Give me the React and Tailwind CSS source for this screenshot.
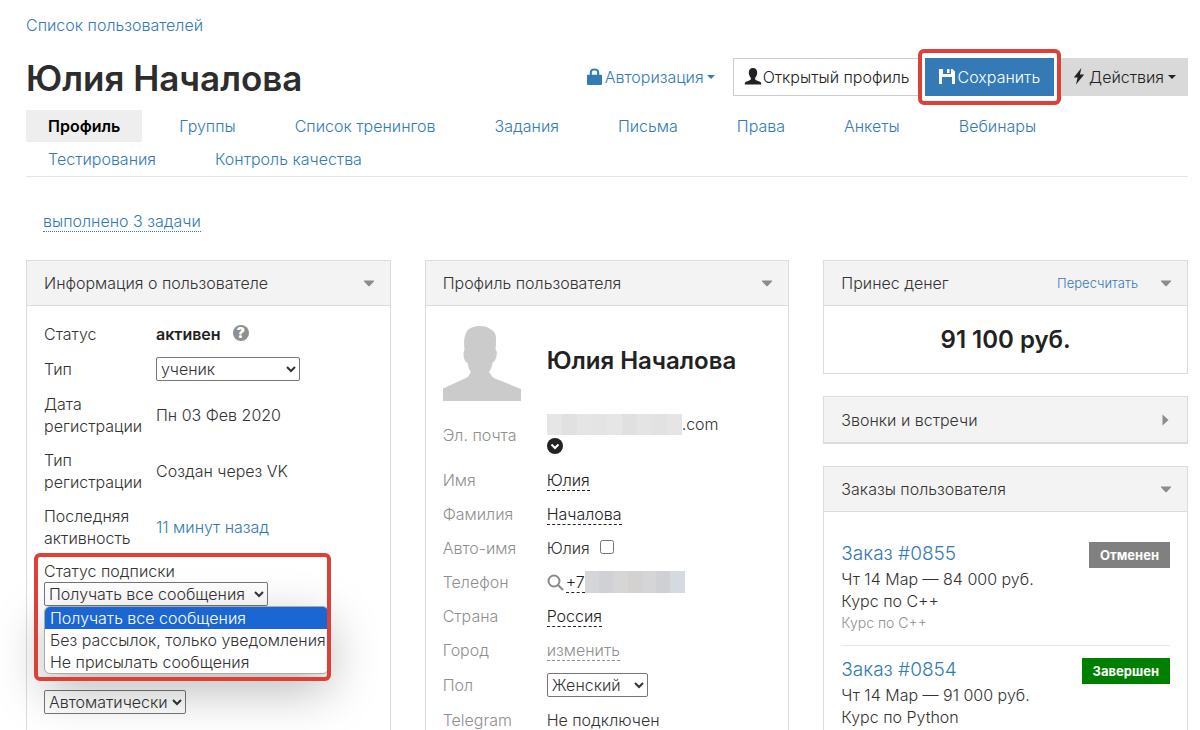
import React, { useState } from 'react';
import clsx from 'clsx';

const TABS = [
  'Профиль',
  'Группы',
  'Список тренингов',
  'Задания',
  'Письма',
  'Права',
  'Анкеты',
  'Вебинары',
  'Тестирования',
  'Контроль качества',
];

const SUBSCRIPTION_OPTIONS = [
  'Получать все сообщения',
  'Без рассылок, только уведомления',
  'Не присылать сообщения',
];

const ORDERS = [
  {
    id: '0855',
    info: 'Чт 14 Мар — 84 000 руб.',
    course: 'Курс по C++',
    note: 'Курс по C++',
    status: 'Отменен',
    statusClass: 'bg-[#808080]',
  },
  {
    id: '0854',
    info: 'Чт 14 Мар — 91 000 руб.',
    course: 'Курс по Python',
    status: 'Завершен',
    statusClass: 'bg-[#008000]',
  },
];

const EMAIL_MASK = ['#e6e6e6', '#e1e1e1', '#e5e5e5', '#e4e4e4', '#e6e6e6', '#e0e0e0', '#e4e4e4', '#e2e2e2', '#e5e5e5'];
const PHONE_MASK = ['#d6d5d8', '#cfd1d4', '#d6d6d6', '#d3d2d0', '#d5d5d8', '#cfd0d4', '#d5dae0'];

function LockIcon() {
  return (
    <svg viewBox="0 0 16 18" className="mb-0.5 h-[17px] w-[15px]" fill="currentColor" aria-hidden="true">
      <path d="M3 7V4.500C3 2 4.800.500 8 .500S13 2 13 4.500V7h2c.600 0 1 .400 1 1v9c0 .600-.400 1-1 1H1c-.600 0-1-.400-1-1V8c0-.600.400-1 1-1zm2.200 0h5.600V4.800C10.800 3.400 9.800 2.700 8 2.700S5.200 3.400 5.200 4.800z" />
    </svg>
  );
}

function UserIcon() {
  return (
    <svg viewBox="0 0 18 18" className="mb-0.5 h-[18px] w-[18px]" fill="currentColor" aria-hidden="true">
      <path d="M9 1c2.700 0 4.200 1.900 4.200 4.500 0 2-.8 4-2 5.200v1.200c0 .7.4 1 1 1.300l3.700 1.500c.9.400 1.300.9 1.300 1.800V17.500H.800v-1c0-.9.400-1.400 1.300-1.800l3.700-1.500c.6-.300 1-.6 1-1.300v-1.200c-1.200-1.200-2-3.200-2-5.200C4.800 2.900 6.300 1 9 1z" />
    </svg>
  );
}

function SaveIcon() {
  return (
    <svg viewBox="0 0 16 15" className="mb-0.5 h-[15px] w-4" fill="currentColor" aria-hidden="true">
      <path d="M0 0h4v5h8V0h1.500L16 2.500V15h-3V8H3v7H0zM8 0h2.500v4H8z" />
    </svg>
  );
}

function FlashIcon() {
  return (
    <svg viewBox="0 0 12 18" className="mb-0.5 h-[17px] w-3" fill="currentColor" aria-hidden="true">
      <path d="M8.500 0 .500 10h4L2.800 17.500 11.500 7H7z" />
    </svg>
  );
}

function Caret() {
  return (
    <svg viewBox="0 0 8 4" className="h-1 w-2" fill="currentColor" aria-hidden="true">
      <path d="M0 0h8L4 4z" />
    </svg>
  );
}

function Avatar() {
  return (
    <svg viewBox="0 0 78 76" className="h-[76px] w-[78px]" fill="#cbcbcb" role="img" aria-label="Фото">
      <path d="M0 76V63.500L23 53c2-1 3-2.500 4-4.500l1-1.500c-2-2.500-3-5.500-3.300-9-2.500-1-4.200-4-4.200-8.500 0-2 .200-3.500 1-4.500-.9-8-.5-14 2.500-19C27 2.500 31 1 37 1c5 0 8 1.200 10 3 4 1.500 6 5 6 10 0 4 0 7-.500 10.500 1 1 1.500 2.500 1.300 4.500-.3 4.500-2 7.500-4.300 8.500-.4 4-1.500 7-3.500 9.500l1.500 2c1 2 2.500 3.500 4.500 4.500L78 64v12z" />
    </svg>
  );
}

function Mask({ colors, className }) {
  return (
    <span className={clsx('flex overflow-hidden', className)} aria-hidden="true">
      {colors.map((color, i) => (
        <span key={i} className="flex-1" style={{ backgroundColor: color }} />
      ))}
    </span>
  );
}

function Panel({ title, action, open = true, className, children }) {
  return (
    <section className={clsx('border border-[#dcdcdc] bg-white', !open && 'border-b-2', className)}>
      <header className={clsx('flex h-[45px] items-center bg-[#f3f3f3] pr-[15px] pl-[17px]', open && 'border-b border-[#dcdcdc]')}>
        <h2 className="flex-1">{title}</h2>
        {action}
        <button type="button" aria-label="Свернуть" className="flex w-3 justify-center text-[#8c8c8c]">
          {open ? (
            <svg viewBox="0 0 12 7" className="h-[7px] w-3" fill="currentColor">
              <path d="M1.500.500h9c.700 0 .8.500.4.900L6.700 6c-.4.400-1 .4-1.400 0L1.100 1.400C.7 1 .800.500 1.500.500z" />
            </svg>
          ) : (
            <svg viewBox="0 0 7 12" className="h-3 w-[7px]" fill="currentColor">
              <path d="M.500.500 6.500 6 .500 11.500z" />
            </svg>
          )}
        </button>
      </header>
      {children}
    </section>
  );
}

function InfoRow({ label, htmlFor, children }) {
  return (
    <div className="flex items-center">
      <label htmlFor={htmlFor} className="w-28 shrink-0 pr-2">{label}</label>
      <div>{children}</div>
    </div>
  );
}

function ProfileRow({ label, htmlFor, children }) {
  return (
    <div className="flex items-center">
      <label htmlFor={htmlFor} className="w-[104px] shrink-0 text-[#8f8f8f]">{label}</label>
      <div>{children}</div>
    </div>
  );
}

function EditLink({ muted, children }) {
  return (
    <a
      href="#edit"
      className={clsx('border-b border-dashed leading-5', muted ? 'border-[#8f8f8f] text-[#8f8f8f]' : 'border-[#222] text-[#222]')}
    >
      {children}
    </a>
  );
}

function Header() {
  return (
    <div className="flex items-center justify-between pt-[22px]">
      <h1 className="pt-0.5 text-[35px] leading-9 font-semibold text-[#2d2d2d]">Юлия Началова</h1>
      <div className="flex h-[38px] items-stretch whitespace-nowrap">
        <button type="button" className="mr-[18px] flex items-center gap-[3px] text-[#337ab7]">
          <LockIcon />
          Авторизация
          <Caret />
        </button>
        <button type="button" className="flex items-center gap-px border border-r-0 border-[#ccc] pr-2 pl-2.5 text-[#222]">
          <UserIcon />
          Открытый профиль
        </button>
        <div className="relative ml-[7px] flex">
          <button type="button" className="flex items-center gap-[3px] bg-[#337ab7] px-3.5 text-white">
            <SaveIcon />
            Сохранить
          </button>
          <span className="pointer-events-none absolute -inset-x-[7px] -inset-y-[9px] rounded-md border-4 border-[#dc4038]" />
        </div>
        <button type="button" className="ml-[7px] flex items-center gap-1 bg-[#d9d9d9] px-3 text-[#222]">
          <FlashIcon />
          Действия
          <Caret />
        </button>
      </div>
    </div>
  );
}

function UserInfo() {
  const [subscription, setSubscription] = useState(SUBSCRIPTION_OPTIONS[0]);

  return (
    <Panel title="Информация о пользователе">
      <div className="flex flex-col gap-3 px-[17px] pt-[17px]">
        <InfoRow label="Статус">
          <div className="flex items-center gap-3">
            <b className="font-semibold text-[#222]">активен</b>
            <span className="mb-0.5 flex h-4 w-4 items-center justify-center rounded-full bg-[#8f8f8f] text-sm font-black text-white">?</span>
          </div>
        </InfoRow>
        <InfoRow label="Тип" htmlFor="type">
          <select id="type" className="block h-6 w-36 rounded-xs border border-[#767676] bg-white">
            <option>ученик</option>
          </select>
        </InfoRow>
        <InfoRow label="Дата регистрации">Пн 03 Фев 2020</InfoRow>
        <InfoRow label="Тип регистрации">Создан через VK</InfoRow>
        <InfoRow label="Последняя активность">
          <a href="#activity" className="text-[#337ab7]">11 минут назад</a>
        </InfoRow>
      </div>

      <div className="relative mx-[17px] mt-[11px]">
        <label htmlFor="subscription" className="block">Статус подписки</label>
        <select
          id="subscription"
          value={subscription}
          onChange={(e) => setSubscription(e.target.value)}
          className="block h-6 w-56 rounded-xs border border-[#767676] bg-white"
        >
          {SUBSCRIPTION_OPTIONS.map((option) => (
            <option key={option}>{option}</option>
          ))}
        </select>
        <ul className="absolute top-full left-0 w-max overflow-hidden rounded-md border border-[#aaa] bg-white whitespace-nowrap shadow-[0_16px_50px_rgba(0,0,0,0.28)]">
          {SUBSCRIPTION_OPTIONS.map((option) => (
            <li key={option} className={clsx('pr-0.5 pl-[5px]', option === subscription && 'bg-[#1a66d2] text-white')}>
              {option}
            </li>
          ))}
        </ul>
        <span className="pointer-events-none absolute -top-[7px] -right-2 -left-[10px] h-32 max-w-[297px] rounded-md border-4 border-[#dc4038]" />
      </div>

      <div className="px-[17px] pt-[84px] pb-8">
        <select aria-label="Режим" className="block h-6 w-[142px] rounded-xs border border-[#767676] bg-transparent">
          <option>Автоматически</option>
        </select>
      </div>
    </Panel>
  );
}

function UserProfile() {
  return (
    <Panel title="Профиль пользователя">
      <div className="flex items-center gap-[26px] px-[17px] pt-[19px]">
        <Avatar />
        <div className="pb-1 text-2xl font-semibold text-[#222]">Юлия Началова</div>
      </div>
      <div className="flex flex-col gap-3 px-[17px] pt-3 pb-6">
        <ProfileRow label="Эл. почта">
          <div className="flex items-center">
            <Mask colors={EMAIL_MASK} className="h-[21px] w-[135px]" />
            .com
          </div>
          <button type="button" aria-label="Ещё" className="flex h-[22px] items-center">
            <svg viewBox="0 0 16 16" className="h-4 w-4" aria-hidden="true">
              <circle cx="8" cy="8" r="8" fill="#222" />
              <path d="m4.500 6.500 3.500 3.500 3.500-3.500" fill="none" stroke="#fff" strokeWidth="2" />
            </svg>
          </button>
        </ProfileRow>
        <ProfileRow label="Имя"><EditLink>Юлия</EditLink></ProfileRow>
        <ProfileRow label="Фамилия"><EditLink>Началова</EditLink></ProfileRow>
        <ProfileRow label="Авто-имя" htmlFor="autoname">
          <div className="flex items-center gap-2.5">
            Юлия
            <input id="autoname" type="checkbox" className="mb-0.5 h-3.5 w-3.5" />
          </div>
        </ProfileRow>
        <ProfileRow label="Телефон">
          <div className="flex h-[22px] items-center">
            <svg viewBox="0 0 17 17" className="mr-0.5 h-[17px] w-[17px]" fill="none" stroke="#8a8a8a" strokeWidth="2" aria-hidden="true">
              <circle cx="7" cy="7" r="5.500" />
              <path d="m11 11 5 5" />
            </svg>
            <EditLink>+7</EditLink>
            <Mask colors={PHONE_MASK} className="h-[22px] w-[100px]" />
          </div>
        </ProfileRow>
        <ProfileRow label="Страна"><EditLink>Россия</EditLink></ProfileRow>
        <ProfileRow label="Город"><EditLink muted>изменить</EditLink></ProfileRow>
        <ProfileRow label="Пол" htmlFor="gender">
          <select id="gender" className="block h-6 w-[101px] rounded-xs border border-[#767676] bg-white">
            <option>Женский</option>
          </select>
        </ProfileRow>
        <ProfileRow label="Telegram">Не подключен</ProfileRow>
      </div>
    </Panel>
  );
}

function Order({ order }) {
  return (
    <li className="border-b border-[#e8e8e8] pt-3 pb-[11px]">
      <div className="flex items-start justify-between">
        <a href="#order" className="text-[19px] leading-6 text-[#337ab7]">Заказ #{order.id}</a>
        <span className={clsx('px-[11px] text-[13px] leading-[26px] font-bold text-white', order.statusClass)}>
          {order.status}
        </span>
      </div>
      <p>{order.info}</p>
      <p>{order.course}</p>
      {order.note && <p className="text-sm leading-[22px] text-[#8f8f8f]">{order.note}</p>}
    </li>
  );
}

export default function App() {
  return (
    <div className="flex h-screen flex-col overflow-y-auto bg-white pr-3 pl-[26px] font-['Inter',sans-serif] text-base leading-[22px] font-light text-[#333] [scrollbar-width:none]">
      <a href="#users" className="mt-3.5 self-start text-[#337ab7]">Список пользователей</a>
      <Header />

      <nav className="mt-3.5 flex flex-wrap gap-x-[15px] border-b border-[#e5e5e5]">
        {TABS.map((tab, i) => (
          <a
            key={tab}
            href="#tab"
            className={clsx('mb-px px-[22px] leading-8', i === 0 ? 'bg-[#eee] font-semibold text-black' : 'text-[#337ab7]')}
          >
            {tab}
          </a>
        ))}
      </nav>

      <a href="#tasks" className="mt-[34px] ml-[17px] self-start border-b border-dotted border-[#337ab7] leading-5 text-[#337ab7]">
        выполнено 3 задачи
      </a>

      <main className="mt-7 grid flex-1 grid-cols-3 gap-x-[34px]">
        <UserInfo />
        <UserProfile />
        <div className="flex flex-col gap-[22px]">
          <Panel
            title="Принес денег"
            action={<button type="button" className="mr-[22px] text-[13px] text-[#337ab7]">Пересчитать</button>}
          >
            <div className="pt-[18px] pb-[17px] text-center text-2xl font-semibold text-[#222]">91 100 руб.</div>
          </Panel>
          <Panel title="Звонки и встречи" open={false} />
          <Panel title="Заказы пользователя" className="flex-1">
            <ul className="px-[17px] pt-[18px]">
              {ORDERS.map((order) => (
                <Order key={order.id} order={order} />
              ))}
            </ul>
          </Panel>
        </div>
      </main>
    </div>
  );
}
